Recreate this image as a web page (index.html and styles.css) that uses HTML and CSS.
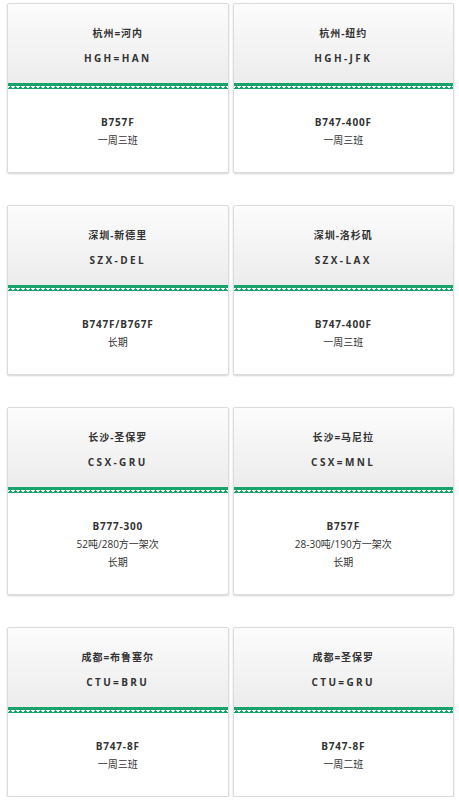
FILE: index.html
```html
<!DOCTYPE html>
<html lang="zh-CN">
<head>
<meta charset="utf-8">
<title>航线</title>
<link rel="stylesheet" href="styles.css">
</head>
<body>
<div class="grid">
  <div class="card">
    <div class="head"><div class="title">杭州=河内</div><div class="code">HGH=HAN</div></div>
    <div class="zig"></div>
    <div class="body"><div class="plane">B757F</div><div class="line">一周三班</div></div>
  </div>
  <div class="card">
    <div class="head"><div class="title">杭州-纽约</div><div class="code">HGH-JFK</div></div>
    <div class="zig"></div>
    <div class="body"><div class="plane">B747-400F</div><div class="line">一周三班</div></div>
  </div>
  <div class="card">
    <div class="head"><div class="title">深圳-新德里</div><div class="code">SZX-DEL</div></div>
    <div class="zig"></div>
    <div class="body"><div class="plane">B747F/B767F</div><div class="line">长期</div></div>
  </div>
  <div class="card">
    <div class="head"><div class="title">深圳-洛杉矶</div><div class="code">SZX-LAX</div></div>
    <div class="zig"></div>
    <div class="body"><div class="plane">B747-400F</div><div class="line">一周三班</div></div>
  </div>
  <div class="card">
    <div class="head"><div class="title">长沙-圣保罗</div><div class="code">CSX-GRU</div></div>
    <div class="zig"></div>
    <div class="body"><div class="plane">B777-300</div><div class="line">52吨/280方一架次</div><div class="line">长期</div></div>
  </div>
  <div class="card">
    <div class="head"><div class="title">长沙=马尼拉</div><div class="code">CSX=MNL</div></div>
    <div class="zig"></div>
    <div class="body"><div class="plane">B757F</div><div class="line">28-30吨/190方一架次</div><div class="line">长期</div></div>
  </div>
  <div class="card">
    <div class="head"><div class="title">成都=布鲁塞尔</div><div class="code">CTU=BRU</div></div>
    <div class="zig"></div>
    <div class="body"><div class="plane">B747-8F</div><div class="line">一周三班</div></div>
  </div>
  <div class="card">
    <div class="head"><div class="title">成都=圣保罗</div><div class="code">CTU=GRU</div></div>
    <div class="zig"></div>
    <div class="body"><div class="plane">B747-8F</div><div class="line">一周二班</div></div>
  </div>
</div>
</body>
</html>
```
FILE: styles.css
```css
html, body {
  margin: 0;
  padding: 0;
  background: #fff;
}
body {
  font-family: "Open Sans", "Noto Sans CJK SC", sans-serif;
  color: #333;
  font-size: 10px;
}
.grid {
  display: grid;
  grid-template-columns: 1fr 1fr;
  column-gap: 4px;
  row-gap: 32px;
  padding: 3px 5px 0 7px;
  align-items: start;
}
.card {
  border: 1px solid #dcdcdc;
  border-radius: 2px;
  box-shadow: 0 1px 2px rgba(0,0,0,0.18);
  background: #fff;
  overflow: hidden;
}
.head {
  height: 79px;
  box-sizing: border-box;
  padding-top: 20px;
  text-align: center;
  background: linear-gradient(#fcfcfc, #ececec);
  display: flex;
  flex-direction: column;
  gap: 7px;
}
.title {
  font-weight: 700;
  line-height: 18px;
  letter-spacing: 1px;
}
.code {
  font-weight: 700;
  line-height: 18px;
  letter-spacing: 2.4px;
}
.zig {
  height: 6px;
  background:
    linear-gradient(#17a369, #17a369) top left / 100% 3px no-repeat,
    conic-gradient(from 135deg at 50% 0, #17a369 90deg, transparent 0) 0 3px / 5px 3px repeat-x;
}
.body {
  padding: 24px 0 23px;
  text-align: center;
}
.plane {
  font-weight: 700;
  line-height: 18px;
  letter-spacing: 0.8px;
}
.line {
  line-height: 18px;
}
```
